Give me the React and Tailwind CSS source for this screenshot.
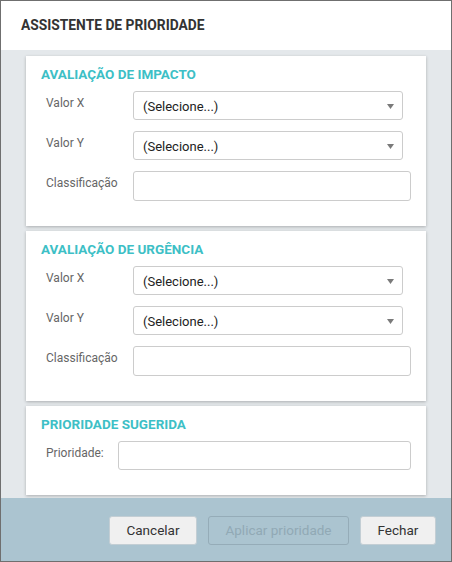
import React from "react";

const font = { fontFamily: "Roboto, 'Liberation Sans', sans-serif" };

function Select() {
  return (
    <div className="relative w-[270px] h-[29px] border border-[#cccccc] rounded-[3px] bg-white flex items-center pl-[9px] pt-[2px]">
      <span className="text-[13px] text-[#222]">(Selecione...)</span>
      <svg
        className="absolute right-[8px] top-[12px]"
        width="7"
        height="5"
        viewBox="0 0 7 5"
      >
        <path d="M0 0 L7 0 L3.5 5 Z" fill="#7a7a7a" />
      </svg>
    </div>
  );
}

function Input({ width = "w-[278px]", height = "h-[30px]" }) {
  return (
    <div
      className={`${width} ${height} border border-[#cccccc] rounded-[3px] bg-white`}
    />
  );
}

function Row({ label, children, labelWidth = "w-[87px]" }) {
  return (
    <div className="flex items-start pl-[5px]">
      <div className={`${labelWidth} pt-[4px] text-[12px] leading-[16px] text-[#666]`}>
        {label}
      </div>
      {children}
    </div>
  );
}

function Card({ title, children }) {
  return (
    <div className="bg-white pt-[10px] pl-[15px] pr-[15px] pb-[25px] shadow-[0_1px_3px_rgba(0,0,0,0.25)]">
      <h3 className="text-[13.5px] leading-[16px] font-bold text-[#3dbfc6] mb-[9px]">
        {title}
      </h3>
      {children}
    </div>
  );
}

function Evaluation({ title }) {
  return (
    <Card title={title}>
      <div className="flex flex-col gap-[11px]">
        <Row label="Valor X">
          <Select />
        </Row>
        <Row label="Valor Y">
          <Select />
        </Row>
        <Row label="Classificação">
          <Input />
        </Row>
      </div>
    </Card>
  );
}

export default function App() {
  return (
    <div
      style={font}
      className="w-[452px] h-[562px] border border-[#6f6f6f] flex flex-col overflow-hidden"
    >
      {/* Header */}
      <div className="h-[49px] bg-white flex items-center pl-[20px]">
        <h2 className="text-[13.8px] font-bold text-[#333]">
          ASSISTENTE DE PRIORIDADE
        </h2>
      </div>

      {/* Body */}
      <div className="flex-1 bg-[#e4e8eb] pt-[6px] px-[25px] flex flex-col gap-[5px]">
        <Evaluation title="AVALIAÇÃO DE IMPACTO" />
        <Evaluation title="AVALIAÇÃO DE URGÊNCIA" />
        <Card title="PRIORIDADE SUGERIDA">
          <Row label="Prioridade:" labelWidth="w-[72px]">
            <Input width="w-[293px]" height="h-[29px]" />
          </Row>
        </Card>
      </div>

      {/* Footer */}
      <div className="h-[63px] shrink-0 bg-[#abc4d0] flex justify-end items-start gap-[11px] pt-[18px] pr-[15px]">
        <button className="w-[88px] h-[29px] bg-[#f0f0f0] border border-[#c3ced4] rounded-[3px] text-[13.5px] text-[#333]">
          Cancelar
        </button>
        <button
          disabled
          className="w-[141px] h-[29px] border border-[#95acb8] rounded-[3px] text-[13.5px] text-[#91a9b5]"
        >
          Aplicar prioridade
        </button>
        <button className="w-[76px] h-[29px] bg-[#f0f0f0] border border-[#c3ced4] rounded-[3px] text-[13.5px] text-[#333]">
          Fechar
        </button>
      </div>
    </div>
  );
}
